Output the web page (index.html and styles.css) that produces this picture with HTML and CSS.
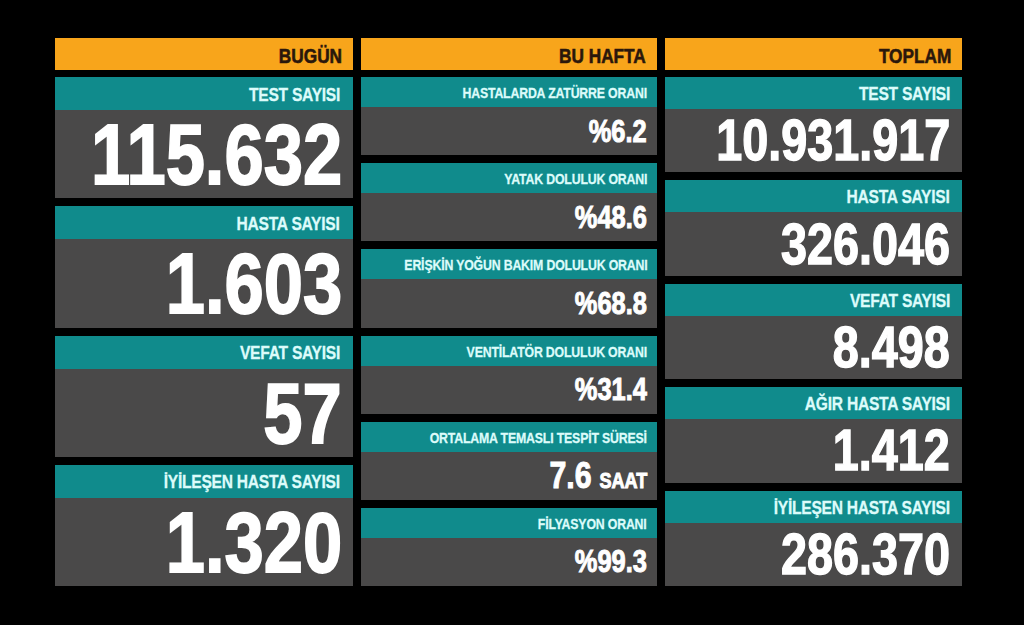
FILE: index.html
```html
<!DOCTYPE html>
<html lang="tr">
<head>
<meta charset="utf-8">
<title>Koronavirüs Tablosu</title>
<link rel="stylesheet" href="styles.css">
</head>
<body>
<div class="board">
  <section class="col col-today">
    <div class="head"><span class="t">BUGÜN</span></div>
    <div class="cards">
      <div class="card"><div class="label"><span class="t">TEST SAYISI</span></div><div class="value"><span class="t">115.632</span></div></div>
      <div class="card"><div class="label"><span class="t">HASTA SAYISI</span></div><div class="value"><span class="t">1.603</span></div></div>
      <div class="card"><div class="label"><span class="t">VEFAT SAYISI</span></div><div class="value"><span class="t">57</span></div></div>
      <div class="card"><div class="label"><span class="t">İYİLEŞEN HASTA SAYISI</span></div><div class="value"><span class="t">1.320</span></div></div>
    </div>
  </section>
  <section class="col col-week">
    <div class="head"><span class="t">BU HAFTA</span></div>
    <div class="cards">
      <div class="card"><div class="label"><span class="t">HASTALARDA ZATÜRRE ORANI</span></div><div class="value"><span class="t">%6.2</span></div></div>
      <div class="card"><div class="label"><span class="t">YATAK DOLULUK ORANI</span></div><div class="value"><span class="t">%48.6</span></div></div>
      <div class="card"><div class="label"><span class="t">ERİŞKİN YOĞUN BAKIM DOLULUK ORANI</span></div><div class="value"><span class="t">%68.8</span></div></div>
      <div class="card"><div class="label"><span class="t">VENTİLATÖR DOLULUK ORANI</span></div><div class="value"><span class="t">%31.4</span></div></div>
      <div class="card"><div class="label"><span class="t">ORTALAMA TEMASLI TESPİT SÜRESİ</span></div><div class="value"><span class="t"><span class="big">7.6</span> <span class="unit">SAAT</span></span></div></div>
      <div class="card"><div class="label"><span class="t">FİLYASYON ORANI</span></div><div class="value"><span class="t">%99.3</span></div></div>
    </div>
  </section>
  <section class="col col-total">
    <div class="head"><span class="t">TOPLAM</span></div>
    <div class="cards">
      <div class="card"><div class="label"><span class="t">TEST SAYISI</span></div><div class="value"><span class="t">10.931.917</span></div></div>
      <div class="card"><div class="label"><span class="t">HASTA SAYISI</span></div><div class="value"><span class="t">326.046</span></div></div>
      <div class="card"><div class="label"><span class="t">VEFAT SAYISI</span></div><div class="value"><span class="t">8.498</span></div></div>
      <div class="card"><div class="label"><span class="t">AĞIR HASTA SAYISI</span></div><div class="value"><span class="t">1.412</span></div></div>
      <div class="card"><div class="label"><span class="t">İYİLEŞEN HASTA SAYISI</span></div><div class="value"><span class="t">286.370</span></div></div>
    </div>
  </section>
</div>
</body>
</html>
```
FILE: styles.css
```css
html, body {
  margin: 0;
  padding: 0;
  background: #000;
  width: 1024px;
  height: 625px;
  overflow: hidden;
}

body {
  font-family: "Liberation Sans", Arial, sans-serif;
  font-weight: bold;
}

.t {
  display: inline-block;
  flex: none;
  transform: scaleX(0.82);
  transform-origin: right center;
  white-space: nowrap;
}

.board {
  display: grid;
  grid-template-columns: 298px 296px 297px;
  column-gap: 8px;
  padding: 38px 0 0 55px;
}

.col {
  display: flex;
  flex-direction: column;
  gap: 7px;
}

.head {
  height: 32px;
  display: flex;
  align-items: center;
  justify-content: flex-end;
  background: #f8a51b;
  color: #2a170b;
  font-size: 21px;
  line-height: 1;
  padding: 2px 11px 0 0;
  box-sizing: border-box;
  -webkit-text-stroke: 0.6px #2a170b;
}

.cards {
  height: 509px;
  display: flex;
  flex-direction: column;
  gap: 8px;
}

.card {
  flex: 1 1 0;
  min-height: 0;
  display: flex;
  flex-direction: column;
  background: #4a4949;
}

.label {
  flex: none;
  display: flex;
  align-items: center;
  justify-content: flex-end;
  box-sizing: border-box;
  background: #108b8c;
  color: #dcfbfa;
  padding: 1px 13px 0 0;
  font-size: 19px;
  height: 33px;
  line-height: 1;
  letter-spacing: -0.3px;
  -webkit-text-stroke: 0.3px #dcfbfa;
}

.value {
  flex: 1 1 0;
  min-height: 0;
  display: flex;
  align-items: center;
  justify-content: flex-end;
  padding-right: 11px;
  color: #fff;
  line-height: 1;
}

.col-today .value {
  font-size: 86px;
  -webkit-text-stroke: 1.8px #fff;
}

.col-week .label {
  font-size: 15px;
  height: 30px;
  padding-right: 10px;
  letter-spacing: -0.2px;
}

.col-week .value {
  font-size: 31px;
  padding-right: 10px;
  -webkit-text-stroke: 1px #fff;
}

.col-week .big {
  font-size: 37px;
}

.col-week .unit {
  font-size: 22px;
  margin-left: 1px;
}

.col-total .label {
  height: 32px;
  padding-right: 12px;
}

.col-total .value {
  font-size: 57px;
  padding-right: 12px;
  -webkit-text-stroke: 1.4px #fff;
}
```
